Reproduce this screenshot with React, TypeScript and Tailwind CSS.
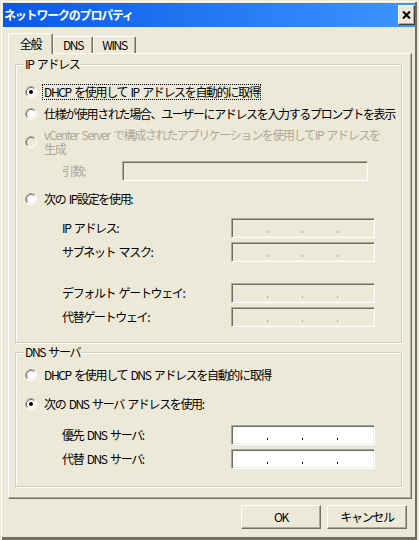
import React from "react";

function Radio({ checked = false, disabled = false }: { checked?: boolean; disabled?: boolean }) {
  return (
    <svg width="12" height="12" viewBox="0 0 12 12" className="shrink-0">
      <circle cx="6" cy="6" r="4.2" fill={disabled ? "#ece9d8" : "#ffffff"} />
      <path d="M2.11 9.89 A5.5 5.5 0 0 1 9.89 2.11" fill="none" stroke="#aca899" strokeWidth="1" />
      <path d="M9.89 2.11 A5.5 5.5 0 0 1 2.11 9.89" fill="none" stroke="#ffffff" strokeWidth="1" />
      <path d="M2.82 9.18 A4.5 4.5 0 0 1 9.18 2.82" fill="none" stroke="#716f64" strokeWidth="1" />
      <path d="M9.18 2.82 A4.5 4.5 0 0 1 2.82 9.18" fill="none" stroke="#f1efe2" strokeWidth="1" />
      {checked && <circle cx="6" cy="6" r="2" fill={disabled ? "#aca899" : "#000000"} />}
    </svg>
  );
}

function IpBox({ enabled = false }: { enabled?: boolean }) {
  const dot = enabled ? "bg-black" : "bg-[#aca899]";
  return (
    <div
      className={`flex h-[20px] w-[144px] items-end border border-t-[#aca899] border-l-[#aca899] border-r-white border-b-white pb-[4px] pl-[1px] shadow-[inset_1px_1px_0_#716f64,inset_-1px_-1px_0_#f1efe2] ${
        enabled ? "bg-white" : "bg-[#ece9d8]"
      }`}
    >
      <div className="w-[34px]" />
      <div className={`h-[2px] w-[1px] ${dot}`} />
      <div className="w-[34px]" />
      <div className={`h-[2px] w-[1px] ${dot}`} />
      <div className="w-[34px]" />
      <div className={`h-[2px] w-[1px] ${dot}`} />
    </div>
  );
}

function RadioRow({
  label,
  checked,
  focus,
  className = "",
}: {
  label: string;
  checked?: boolean;
  focus?: boolean;
  className?: string;
}) {
  return (
    <div className={`flex h-[17px] items-center gap-[5px] pl-[9px] ${className}`}>
      <Radio checked={checked} />
      <span
        className={`whitespace-nowrap border px-[1px] leading-[14px] ${
          focus ? "border-dotted border-black" : "border-transparent"
        }`}
      >
        {label}
      </span>
    </div>
  );
}

function FieldRow({ label, enabled, className = "" }: { label: string; enabled?: boolean; className?: string }) {
  return (
    <div className={`flex h-[20px] items-center pl-[46px] ${className}`}>
      <span className="w-[169px] whitespace-nowrap leading-[14px]">{label}</span>
      <IpBox enabled={enabled} />
    </div>
  );
}

function Group({ title, className = "", children }: { title: string; className?: string; children: React.ReactNode }) {
  return (
    <div
      className={`relative ml-[6px] w-[387px] border border-[#d0d0bf] shadow-[inset_1px_1px_0_#ffffff,1px_1px_0_#ffffff] ${className}`}
    >
      <span className="absolute -top-[8px] left-[8px] whitespace-nowrap bg-[#ece9d8] px-[1px] leading-[14px]">
        {title}
      </span>
      {children}
    </div>
  );
}

function Button({ children }: { children: React.ReactNode }) {
  return (
    <button className="flex h-[24px] w-[80px] items-center justify-center border border-t-white border-l-white border-r-[#716f64] border-b-[#716f64] bg-[#ece9d8] shadow-[inset_-1px_-1px_0_#aca899] leading-[14px]">
      {children}
    </button>
  );
}

export default function App() {
  return (
    <div className="flex h-[540px] w-[419px] flex-col bg-[#ece9d8] pl-[3px] pr-[4px] pt-[3px] font-['Noto_Sans_CJK_JP',sans-serif] text-[12px] tracking-[-1.35px] [word-spacing:2px] text-black shadow-[inset_1px_1px_0_#ece9d8,inset_2px_2px_0_#ffffff,inset_-2px_0_0_#ece9d8,inset_-4px_0_0_#716f64,inset_0_-3px_0_#716f64]">
      {/* title bar */}
      <div className="flex h-[24px] items-center justify-between bg-gradient-to-r from-[#0a58e6] to-[#3d95ff] pl-[1px]">
        <span className="font-bold leading-[14px] tracking-[-1.2px] text-white">ネットワークのプロパティ</span>
        <div className="flex h-[20px] w-[17px] items-center justify-center border border-t-white border-l-white border-r-[#404040] border-b-[#404040] bg-[#ece9d8] shadow-[inset_-1px_-1px_0_#aca899]">
          <svg width="9" height="8" viewBox="0 0 9 8">
            <path d="M1 0.5 L8 7.5 M8 0.5 L1 7.5" stroke="#000" strokeWidth="2" />
          </svg>
        </div>
      </div>

      {/* tabs */}
      <div className="ml-[5px] mt-[6px] flex h-[20px] items-end">
        <div className="relative z-10 -mb-px flex h-[21px] w-[45px] items-center justify-center rounded-t-[2px] border-l border-t border-r border-l-white border-t-white border-r-[#716f64] bg-[#ece9d8] pb-[1px] shadow-[inset_-1px_0_0_#aca899]">
          全般
        </div>
        <div className="flex h-[17px] w-[40px] items-center justify-center rounded-t-[2px] border-l border-t border-r border-l-white border-t-white border-r-[#716f64] shadow-[inset_-1px_0_0_#aca899]">
          DNS
        </div>
        <div className="flex h-[17px] w-[43px] items-center justify-center rounded-t-[2px] border-l border-t border-r border-l-white border-t-white border-r-[#716f64] shadow-[inset_-1px_0_0_#aca899]">
          WINS
        </div>
      </div>

      {/* panel */}
      <div className="ml-[5px] flex h-[446px] w-[404px] flex-col border border-t-white border-l-white border-r-[#716f64] border-b-[#716f64] pt-[10px] shadow-[inset_-1px_-1px_0_#aca899]">
        <Group title="IP アドレス" className="h-[279px]">
          <RadioRow label="DHCP を使用して IP アドレスを自動的に取得" checked focus className="mt-[18px]" />
          <RadioRow label="仕様が使用された場合、ユーザーにアドレスを入力するプロンプトを表示" className="mt-[5px] h-[16px]" />
          <div className="mt-[6px] flex h-[28px] items-center gap-[5px] pl-[9px]">
            <Radio disabled />
            <span className="whitespace-nowrap border border-transparent px-[1px] leading-[14px] text-[#aca899]">
              vCenter Server で構成されたアプリケーションを使用してIP アドレスを
              <br />
              生成
            </span>
          </div>
          <div className="mt-[5px] flex h-[20px] items-center pl-[46px]">
            <span className="w-[60px] leading-[14px] text-[#aca899]">引数:</span>
            <div className="h-[20px] w-[246px] border border-t-[#aca899] border-l-[#aca899] border-r-white border-b-white shadow-[inset_1px_1px_0_#716f64,inset_-1px_-1px_0_#f1efe2]" />
          </div>
          <RadioRow label="次の IP設定を使用:" className="mt-[9px]" />
          <FieldRow label="IP アドレス:" className="mt-[11px]" />
          <FieldRow label="サブネット マスク:" className="mt-[4px]" />
          <FieldRow label="デフォルト ゲートウェイ:" className="mt-[21px]" />
          <FieldRow label="代替ゲートウェイ:" className="mt-[4px]" />
        </Group>

        <Group title="DNS サーバ" className="mt-[9px] h-[135px]">
          <RadioRow label="DHCP を使用して DNS アドレスを自動的に取得" className="mt-[13px]" />
          <RadioRow label="次の DNS サーバ アドレスを使用:" checked className="mt-[12px]" />
          <FieldRow label="優先 DNS サーバ:" enabled className="mt-[13px]" />
          <FieldRow label="代替 DNS サーバ:" enabled className="mt-[4px]" />
        </Group>
      </div>

      {/* buttons */}
      <div className="mr-[8px] mt-[6px] flex justify-end gap-[6px]">
        <Button>OK</Button>
        <Button>キャンセル</Button>
      </div>
    </div>
  );
}
